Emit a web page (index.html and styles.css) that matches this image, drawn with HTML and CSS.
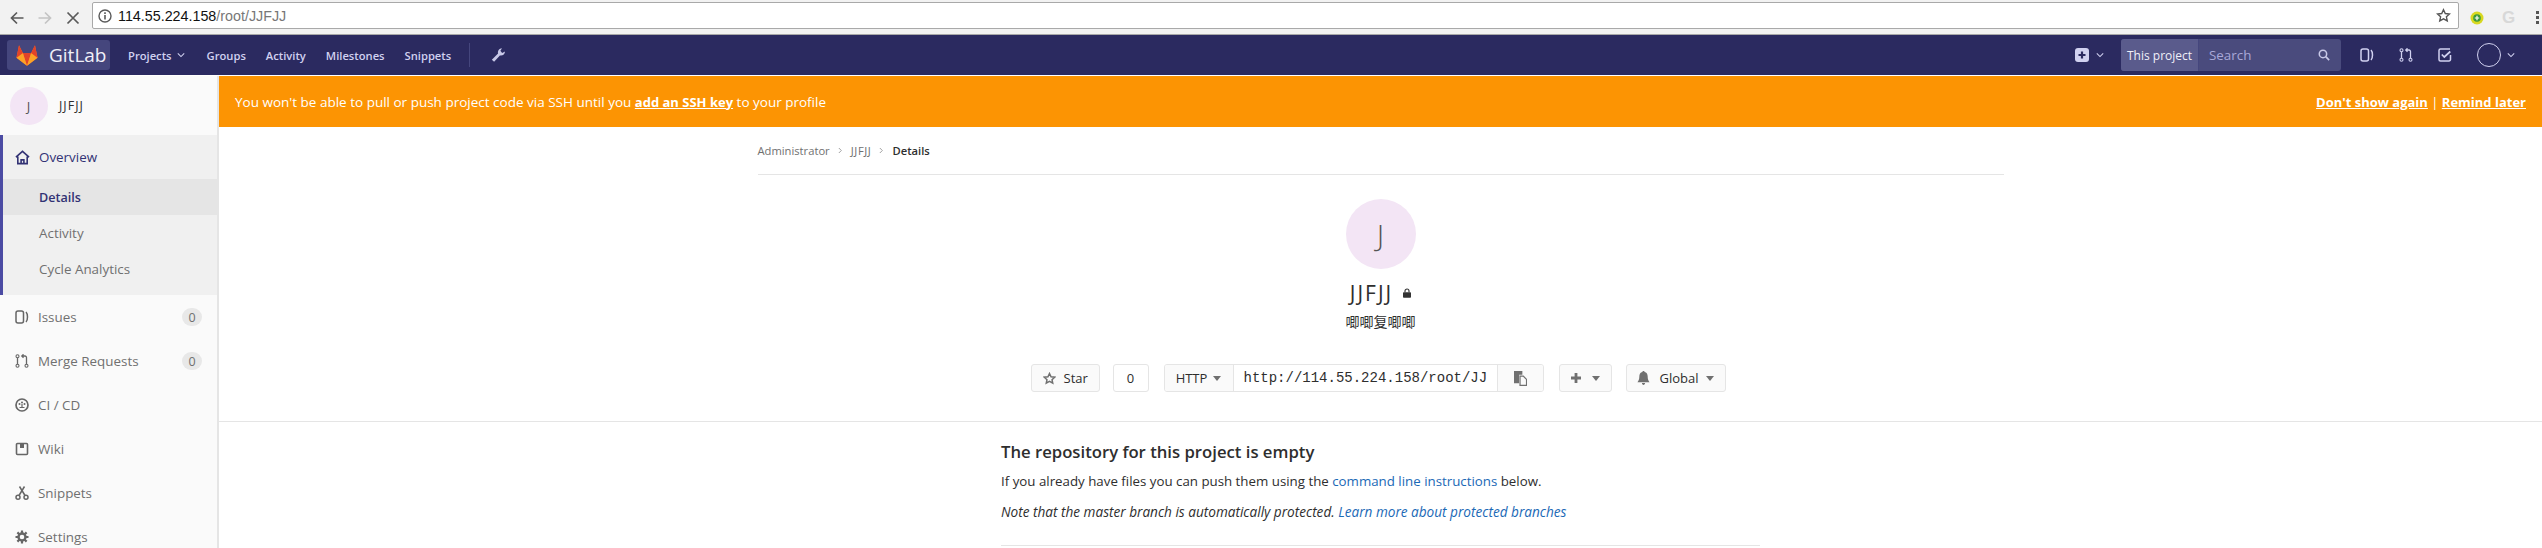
FILE: index.html
```html
<!DOCTYPE html>
<html>
<head>
    <title>JJFJJ · Details · GitLab</title>
    <link rel="stylesheet" href="styles.css">
</head>
<body>
    <!-- browser chrome -->
    <div class="browser-bar">
        <svg class="chrome-btn" viewBox="0 0 16 16" width="16" height="16"><path d="M14.5 8H2.5M8 2.5L2.5 8 8 13.5" fill="none" stroke="#5a5a5a" stroke-width="1.7"/></svg>
        <svg class="chrome-btn" viewBox="0 0 16 16" width="16" height="16"><path d="M1.5 8h12M8 2.5L13.5 8 8 13.5" fill="none" stroke="#c4c4c4" stroke-width="1.7"/></svg>
        <svg class="chrome-btn" viewBox="0 0 16 16" width="16" height="16"><path d="M2.5 2.500l11 11M13.500 2.500l-11 11" fill="none" stroke="#5a5a5a" stroke-width="1.7"/></svg>
        <div class="url-box">
            <svg viewBox="0 0 14 14" width="14" height="14"><circle cx="7" cy="7" r="6" fill="none" stroke="#5a5a5a" stroke-width="1.4"/><path d="M7 6v4.500M7 3.300v1.600" stroke="#5a5a5a" stroke-width="1.600"/></svg>
            <span class="url-text"><b>114.55.224.158</b>/root/JJFJJ</span>
            <svg class="url-star" viewBox="0 0 16 16" width="15" height="15"><path d="M8 1.800l1.900 4.100 4.500.5-3.300 3 .9 4.400L8 11.600l-4 2.200.9-4.400-3.300-3 4.500-.5z" fill="none" stroke="#555" stroke-width="1.500"/></svg>
        </div>
        <div class="ext-icons">
            <svg viewBox="0 0 14 14" width="14" height="14"><circle cx="7" cy="7" r="6.500" fill="#d8d820"/><circle cx="7" cy="7" r="3.800" fill="#3a9a3a"/><path d="M7 4.800v4.400M4.800 7h4.400" stroke="#fff" stroke-width="1.200"/></svg>
            <span class="ext-g">G</span>
            <span class="ext-dots"><i></i><i></i><i></i></span>
        </div>
    </div>

    <nav class="navbar">
        <a class="brand">
            <svg viewBox="0 0 36 36" width="24" height="23"><path d="M18 34L1.500 21.500 5.500 2 11.500 14h13L30.500 2l4 19.500z" fill="#fc6d26"/><path d="M18 34L11.500 14h13z" fill="#e24329"/><path d="M18 34L1.500 21.500 11.500 14z" fill="#fca326"/><path d="M18 34l16.500-12.500L24.500 14z" fill="#fca326"/><path d="M11.500 14L5.500 2 1.500 21.500z" fill="#e24329"/><path d="M24.500 14l6-12 4 19.500z" fill="#e24329"/></svg>
            <span>GitLab</span>
        </a>
        <ul class="nav-links">
            <li class="nav-projects">Projects <svg class="chev" viewBox="0 0 10 6" width="8" height="6"><path d="M1 1l4 4 4-4" fill="none" stroke="currentColor" stroke-width="1.300"/></svg></li>
            <li>Groups</li>
            <li>Activity</li>
            <li>Milestones</li>
            <li>Snippets</li>
        </ul>
        <div class="nav-wrench">
            <svg viewBox="0 0 16 16" width="15" height="16"><path d="M3.300 15.200L.9 13 7.500 6.400C6.900 3.700 8.600 .9 11.800 .8L10 3.400l1.900 2.500 3-1.700C15 7 12.300 9.200 9.500 8.500z" fill="#c8c8e8"/></svg>
        </div>
        <div class="nav-right">
            <div class="new-menu">
                <svg viewBox="0 0 14 14" width="14" height="14"><rect width="14" height="14" rx="3" fill="#d1d1f0"/><path d="M7 3.500v7M3.500 7h7" stroke="#2b2a60" stroke-width="2.200"/></svg>
                <svg class="chev" viewBox="0 0 10 6" width="8" height="6"><path d="M1 1l4 4 4-4" fill="none" stroke="currentColor" stroke-width="1.300"/></svg>
            </div>
            <div class="search-box">
                <span class="search-scope">This project</span>
                <span class="search-input">Search</span>
                <svg viewBox="0 0 14 14" width="12" height="12"><circle cx="5.800" cy="5.800" r="4.300" fill="none" stroke="#c8c8e8" stroke-width="1.800"/><path d="M9 9l4 4" stroke="#c8c8e8" stroke-width="2"/></svg>
            </div>
            <div class="nav-icons">
                <svg viewBox="0 0 14 14" width="14" height="14"><rect x="1" y="1" width="7.500" height="12" rx="2" fill="none" stroke="#d1d1f0" stroke-width="1.500"/><path d="M11 2c2 2 2 8 0 10" fill="none" stroke="#d1d1f0" stroke-width="1.500"/></svg>
                <svg viewBox="0 0 14 14" width="14" height="14"><circle cx="2.500" cy="2.200" r="1.500" fill="none" stroke="#d1d1f0" stroke-width="1.100"/><circle cx="2.500" cy="11.800" r="1.500" fill="none" stroke="#d1d1f0" stroke-width="1.100"/><circle cx="11.500" cy="11.800" r="1.500" fill="none" stroke="#d1d1f0" stroke-width="1.100"/><path d="M2.500 3.800v6.400M11.500 10.200V3.500C11.500 2.500 10.800 2 10 2H7.500M8.500 .3L6.800 2l1.700 1.700" fill="none" stroke="#d1d1f0" stroke-width="1.300"/></svg>
                <svg viewBox="0 0 14 14" width="14" height="14"><path d="M12.500 7v4.500a1.500 1.500 0 0 1-1.500 1.500H2.500A1.500 1.500 0 0 1 1 11.500V2.500A1.500 1.500 0 0 1 2.500 1H12" fill="none" stroke="#d1d1f0" stroke-width="1.500"/><path d="M3.800 6.500L6.300 9l6-5.500" fill="none" stroke="#d1d1f0" stroke-width="1.700"/></svg>
                <div class="user-menu">
                    <span class="user-avatar"></span>
                    <svg class="chev" viewBox="0 0 10 6" width="8" height="6"><path d="M1 1l4 4 4-4" fill="none" stroke="currentColor" stroke-width="1.300"/></svg>
                </div>
            </div>
        </div>
    </nav>

    <div class="page">
        <aside class="sidebar">
            <div class="project-head">
                <span class="letter-avatar">J</span>
                <span class="project-name">JJFJJ</span>
            </div>
            <div class="side-group">
                <a class="side-item active-parent">
                    <svg viewBox="0 0 16 16" width="15" height="15"><path d="M1 7.500L8 1.500l7 6M3 7v7.500h10V7M6.500 14.500v-4h3v4" fill="none" stroke="#323274" stroke-width="1.700"/></svg>
                    Overview
                </a>
                <a class="sub-item current">Details</a>
                <a class="sub-item">Activity</a>
                <a class="sub-item">Cycle Analytics</a>
            </div>
            <a class="side-item">
                <svg viewBox="0 0 14 14" width="14" height="14"><rect x="1" y="1" width="7.500" height="12" rx="2" fill="none" stroke="#666" stroke-width="1.500"/><path d="M11 2c2 2 2 8 0 10" fill="none" stroke="#666" stroke-width="1.500"/></svg>
                <span class="side-label">Issues</span><span class="count">0</span>
            </a>
            <a class="side-item">
                <svg viewBox="0 0 14 14" width="14" height="14"><circle cx="2.500" cy="2.200" r="1.500" fill="none" stroke="#666" stroke-width="1.100"/><circle cx="2.500" cy="11.800" r="1.500" fill="none" stroke="#666" stroke-width="1.100"/><circle cx="11.500" cy="11.800" r="1.500" fill="none" stroke="#666" stroke-width="1.100"/><path d="M2.500 3.800v6.400M11.500 10.200V3.500C11.500 2.500 10.800 2 10 2H7.500M8.500 .3L6.800 2l1.700 1.700" fill="none" stroke="#666" stroke-width="1.300"/></svg>
                <span class="side-label">Merge Requests</span><span class="count">0</span>
            </a>
            <a class="side-item">
                <svg viewBox="0 0 14 14" width="14" height="14"><circle cx="7" cy="7" r="6" fill="none" stroke="#666" stroke-width="1.700"/><circle cx="4.500" cy="6" r="1" fill="#666"/><circle cx="9.500" cy="6" r="1" fill="#666"/><circle cx="7" cy="4.500" r="1" fill="#666"/><path d="M4.500 9.500h5M7 6v3" stroke="#666" stroke-width="1.200"/></svg>
                <span class="side-label">CI / CD</span>
            </a>
            <a class="side-item">
                <svg viewBox="0 0 14 14" width="14" height="14"><path d="M2.500 1.500h9a1 1 0 0 1 1 1v9a1 1 0 0 1-1 1h-9a1 1 0 0 1-1-1v-9a1 1 0 0 1 1-1z" fill="none" stroke="#666" stroke-width="1.600"/><path d="M5 1.500h4v4.500H5z" fill="#666"/></svg>
                <span class="side-label">Wiki</span>
            </a>
            <a class="side-item">
                <svg viewBox="0 0 14 14" width="14" height="14"><circle cx="3" cy="11.200" r="2" fill="none" stroke="#666" stroke-width="1.500"/><circle cx="11" cy="11.200" r="2" fill="none" stroke="#666" stroke-width="1.500"/><path d="M4 9.500L9.500 .5M10 9.500L4.500 .5" stroke="#666" stroke-width="1.500"/></svg>
                <span class="side-label">Snippets</span>
            </a>
            <a class="side-item">
                <svg viewBox="0 0 14 14" width="14" height="14"><circle cx="7" cy="7" r="3.500" fill="none" stroke="#666" stroke-width="2.400"/><path d="M7 .5v3M7 10.500v3M.5 7h3M10.500 7h3M2.400 2.400l2.100 2.100M9.500 9.500l2.100 2.100M11.600 2.400L9.500 4.500M4.500 9.500l-2.100 2.100" stroke="#666" stroke-width="2.200"/></svg>
                <span class="side-label">Settings</span>
            </a>
        </aside>

        <main class="content">
            <div class="alert-bar">
                <span>You won't be able to pull or push project code via SSH until you <a>add an SSH key</a> to your profile</span>
                <span class="alert-actions"><a>Don't show again</a> | <a>Remind later</a></span>
            </div>

            <div class="container">
                <div class="breadcrumbs">
                    <a>Administrator</a>
                    <svg viewBox="0 0 6 8" width="5" height="7"><path d="M1 1l3 3-3 3" fill="none" stroke="#999" stroke-width="1.100"/></svg>
                    <a class="crumb-project">JJFJJ</a>
                    <svg viewBox="0 0 6 8" width="5" height="7"><path d="M1 1l3 3-3 3" fill="none" stroke="#999" stroke-width="1.100"/></svg>
                    <b>Details</b>
                </div>
            </div>

            <div class="project-home">
                <span class="big-avatar">J</span>
                <h1><span class="title-text">JJFJJ</span><svg viewBox="0 0 10 12" width="8" height="10"><path d="M2.500 5V3.500a2.500 2.500 0 0 1 5 0V5" fill="none" stroke="#333" stroke-width="1.400"/><rect y="5" width="10" height="7" rx="1" fill="#333"/></svg></h1>
                <p class="project-desc">唧唧复唧唧</p>
                <div class="project-actions">
                    <a class="btn star-btn">
                        <svg viewBox="0 0 16 16" width="13" height="13"><path d="M8 1.800l1.900 4.100 4.500.5-3.300 3 .9 4.400L8 11.600l-4 2.200.9-4.400-3.300-3 4.500-.5z" fill="none" stroke="#707070" stroke-width="1.800"/></svg>
                        Star
                    </a>
                    <span class="star-count">0</span>
                    <div class="clone-group">
                        <a class="clone-proto">HTTP <i class="caret"></i></a>
                        <span class="clone-url">http://114.55.224.158/root/JJ</span>
                        <a class="clone-copy">
                            <svg viewBox="0 0 14 16" width="13" height="15"><path d="M0 0h9v4H5.500v9H0z" fill="#707070"/><path d="M6.500 5.500H10l3.500 3.500v6.500h-7z" fill="none" stroke="#707070" stroke-width="1.300"/></svg>
                        </a>
                    </div>
                    <a class="btn plus-btn">
                        <svg viewBox="0 0 12 12" width="12" height="12"><path d="M6 1v10M1 6h10" stroke="#707070" stroke-width="2.800"/></svg>
                        <i class="caret"></i>
                    </a>
                    <a class="btn notify-btn">
                        <svg viewBox="0 0 14 15" width="13" height="14"><path d="M7 0c.8 0 1.200.5 1.200 1.100C10.500 1.700 11.500 3.500 11.500 6c0 3 .7 4.500 2 6H.5c1.300-1.500 2-3 2-6 0-2.500 1-4.300 3.300-4.900C5.800.5 6.200 0 7 0zM5.300 13h3.400c0 1.200-.8 2-1.700 2s-1.700-.8-1.700-2z" fill="#707070"/></svg>
                        Global <i class="caret"></i>
                    </a>
                </div>
            </div>

            <div class="empty-wrap">
                <div class="empty-repo">
                    <h2>The repository for this project is empty</h2>
                    <p>If you already have files you can push them using the <a>command line instructions</a> below.</p>
                    <p class="note"><em>Note that the master branch is automatically protected. <a>Learn more about protected branches</a></em></p>
                    <hr>
                </div>
            </div>
        </main>
    </div>
</body>
</html>
```
FILE: styles.css
```css
html, body {
    margin: 0;
    padding: 0;
    height: 548px;
    overflow: hidden;
}
body {
    font-family: "Open Sans", "Noto Sans CJK SC", sans-serif;
    font-size: 13px;
    color: #2e2e2e;
    background-color: white;
}
a {
    text-decoration: none;
}
svg {
    flex: none;
}

/* browser chrome */
.browser-bar {
    height: 34px;
    display: flex;
    align-items: center;
    background-color: #f2f2f2;
    border-bottom: 1px solid #a8a8a8;
    padding-left: 9px;
}
.chrome-btn {
    margin-right: 12px;
    margin-top: 1px;
}
.chrome-btn:nth-child(3) {
    margin-right: 11px;
}
.url-box {
    width: 2367px;
    height: 27px;
    align-self: flex-start;
    margin-top: 2px;
    box-sizing: border-box;
    display: flex;
    align-items: center;
    background-color: white;
    border: 1px solid #a9a9a9;
    border-radius: 2px;
    padding: 0 7px 0 5px;
}
.url-text {
    margin-left: 6px;
    font-family: "Liberation Sans", Arial, sans-serif;
    font-size: 14.3px;
    color: #777;
    flex: 1;
}
.url-text b {
    font-weight: normal;
    color: #111;
}
.ext-icons {
    display: flex;
    align-items: center;
    margin-left: 11px;
    margin-top: 1px;
}
.ext-g {
    margin-left: 18px;
    font-family: "Liberation Sans", Arial, sans-serif;
    font-weight: bold;
    font-size: 17px;
    color: #d8d8d8;
}
.ext-dots {
    margin-left: 21px;
    display: flex;
    flex-direction: column;
    gap: 2px;
}
.ext-dots i {
    width: 3px;
    height: 3px;
    background-color: #555;
}

/* top nav */
.navbar {
    height: 40px;
    display: flex;
    align-items: center;
    background-color: #2b2a60;
    border-bottom: 1px solid #fff;
    padding: 0 7px;
    color: #d1d1f0;
}
.brand {
    width: 103px;
    height: 30px;
    box-sizing: border-box;
    display: flex;
    align-items: center;
    gap: 10px;
    padding-left: 8px;
    border-radius: 3px;
    background-color: #45467d;
    color: #f0f0f8;
    font-size: 19px;
}
.nav-links {
    list-style: none;
    margin: 0 0 0 18px;
    padding: 0;
    display: flex;
    gap: 20px;
    font-weight: 600;
    font-size: 11.2px;
}
.nav-projects {
    display: flex;
    align-items: center;
    gap: 5px;
    margin-right: 2px;
}
.chev {
    color: #d1d1f0;
}
.nav-wrench {
    margin-left: 18px;
    padding-left: 21px;
    height: 24px;
    display: flex;
    align-items: center;
    border-left: 1px solid #45467d;
}
.nav-right {
    margin-left: auto;
    display: flex;
    align-items: center;
}
.new-menu {
    display: flex;
    align-items: center;
    gap: 7px;
    margin-right: 17px;
}
.search-box {
    width: 220px;
    height: 32px;
    display: flex;
    align-items: center;
    background-color: #4a4b7d;
    border-radius: 3px;
    overflow: hidden;
    padding-right: 11px;
    box-sizing: border-box;
}
.search-scope {
    height: 100%;
    width: 77px;
    flex: none;
    display: flex;
    align-items: center;
    justify-content: center;
    background-color: #5a5b8c;
    border-right: 1px solid #45467d;
    color: #f0f0f8;
    font-size: 12px;
}
.search-input {
    flex: 1;
    padding-left: 10px;
    color: #a8a8d8;
    font-size: 13.4px;
}
.nav-icons {
    display: flex;
    align-items: center;
    gap: 25px;
    margin-left: 19px;
    margin-right: 20px;
}
.user-menu {
    display: flex;
    align-items: center;
    gap: 6px;
}
.user-avatar {
    width: 22px;
    height: 22px;
    border: 1px solid #d1d1f0;
    border-radius: 50%;
}

/* page */
.page {
    display: flex;
}
.sidebar {
    width: 219px;
    flex: none;
    height: 473px;
    box-sizing: border-box;
    background-color: #fafafa;
    border-right: 2px solid #e5e5e5;
    color: #707070;
}
.project-head {
    height: 59px;
    display: flex;
    align-items: center;
    padding-left: 10px;
    gap: 11px;
    color: #2e2e2e;
    font-size: 12.5px;
    letter-spacing: 1px;
}
.letter-avatar {
    width: 38px;
    height: 38px;
    border-radius: 50%;
    display: flex;
    align-items: center;
    justify-content: center;
    background-color: #f3e5f5;
    color: #555;
    font-size: 13px;
}
.side-group {
    height: 160px;
    box-sizing: border-box;
    background-color: #f0f0f0;
    border-left: 3px solid #4b4ba3;
}
.side-item {
    height: 44px;
    display: flex;
    align-items: center;
    gap: 9px;
    padding-left: 15px;
    padding-right: 15px;
    font-size: 13.4px;
}
.active-parent {
    padding-left: 12px;
    color: #323274;
}
.sub-item {
    height: 36px;
    display: flex;
    align-items: center;
    padding-left: 36px;
    font-size: 13.4px;
}
.sub-item.current {
    background-color: #e5e5e5;
    color: #323274;
    font-size: 12.6px;
    font-weight: 600;
}
.side-label {
    flex: 1;
}
.count {
    width: 20px;
    height: 18px;
    display: flex;
    align-items: center;
    justify-content: center;
    border-radius: 9px;
    background-color: #e8e8e8;
    font-size: 12.5px;
}

/* main column */
.content {
    flex: 1;
    min-width: 0;
}
.alert-bar {
    height: 51px;
    display: flex;
    align-items: center;
    justify-content: space-between;
    padding: 0 16px;
    background-color: #fc9403;
    color: white;
    font-size: 13.5px;
}
.alert-bar a {
    color: white;
    font-weight: 700;
    font-size: 13px;
    text-decoration: underline;
}
.alert-actions {
    font-size: 13px;
}
.container {
    width: 1246px;
    margin: 0 auto;
}
.breadcrumbs {
    height: 47px;
    display: flex;
    align-items: center;
    gap: 8px;
    border-bottom: 1px solid #e5e5e5;
    font-size: 11.2px;
    color: #707070;
}
.crumb-project {
    letter-spacing: .6px;
}
.breadcrumbs b {
    color: #2e2e2e;
    font-weight: 600;
}
.project-home {
    height: 247px;
    box-sizing: border-box;
    border-bottom: 1px solid #e5e5e5;
    display: flex;
    flex-direction: column;
    align-items: center;
    padding-top: 24px;
}
.big-avatar {
    width: 70px;
    height: 70px;
    flex: none;
    border-radius: 50%;
    display: flex;
    align-items: center;
    justify-content: center;
    background-color: #f3e5f5;
    color: #555;
    font-size: 30px;
    font-weight: 300;
}
.project-home h1 {
    margin: 10px 0 0;
    display: flex;
    align-items: center;
    gap: 10px;
    font-size: 21px;
    font-weight: 400;
    line-height: 28px;
}
.title-text {
    letter-spacing: 2px;
}
.project-desc {
    margin: 6px 0 0;
    font-size: 14px;
    line-height: 18px;
}
.project-actions {
    margin-top: 33px;
    margin-right: 5px;
    display: flex;
    align-items: stretch;
    height: 28px;
    color: #2e2e2e;
    font-size: 13px;
}
.btn, .clone-group, .star-count {
    box-sizing: border-box;
    display: flex;
    align-items: center;
    border: 1px solid #e5e5e5;
    border-radius: 3px;
}
.btn {
    background-color: #fafafa;
}
.star-btn {
    width: 69px;
    padding-left: 11px;
    gap: 8px;
}
.star-count {
    width: 36px;
    margin-left: 13px;
    justify-content: center;
    background-color: white;
}
.clone-group {
    margin-left: 15px;
    overflow: hidden;
}
.clone-proto {
    width: 69px;
    height: 100%;
    flex: none;
    box-sizing: border-box;
    display: flex;
    align-items: center;
    justify-content: center;
    gap: 6px;
    background-color: #fafafa;
    border-right: 1px solid #e5e5e5;
}
.clone-url {
    width: 263px;
    padding-left: 10px;
    box-sizing: border-box;
    line-height: 26px;
    font-family: "Liberation Mono", monospace;
    font-size: 14px;
    white-space: nowrap;
}
.clone-copy {
    width: 45px;
    height: 100%;
    flex: none;
    display: flex;
    align-items: center;
    justify-content: center;
    background-color: #fafafa;
    border-left: 1px solid #e5e5e5;
}
.plus-btn {
    width: 53px;
    margin-left: 15px;
    padding-left: 10px;
    gap: 10px;
}
.notify-btn {
    width: 100px;
    margin-left: 14px;
    padding-left: 10px;
    gap: 10px;
}
.notify-btn .caret {
    margin-left: -3px;
}
.caret {
    flex: none;
    width: 0;
    height: 0;
    border-left: 4.500px solid transparent;
    border-right: 4.500px solid transparent;
    border-top: 5px solid #707070;
}
.empty-wrap {
    width: 759px;
    margin: 0 auto;
}
.empty-repo {
    padding-top: 19px;
}
.empty-repo h2 {
    margin: 0;
    font-size: 16.7px;
    font-weight: 600;
    line-height: 22px;
}
.empty-repo p {
    margin: 9px 0 0;
    font-size: 13.3px;
    line-height: 18px;
}
.empty-repo p.note {
    margin-top: 13px;
    font-size: 13.6px;
}
.empty-repo a {
    color: #1b69b6;
}
.empty-repo hr {
    margin: 24px 0 0;
    border: 0;
    border-top: 1px solid #e5e5e5;
}
```
